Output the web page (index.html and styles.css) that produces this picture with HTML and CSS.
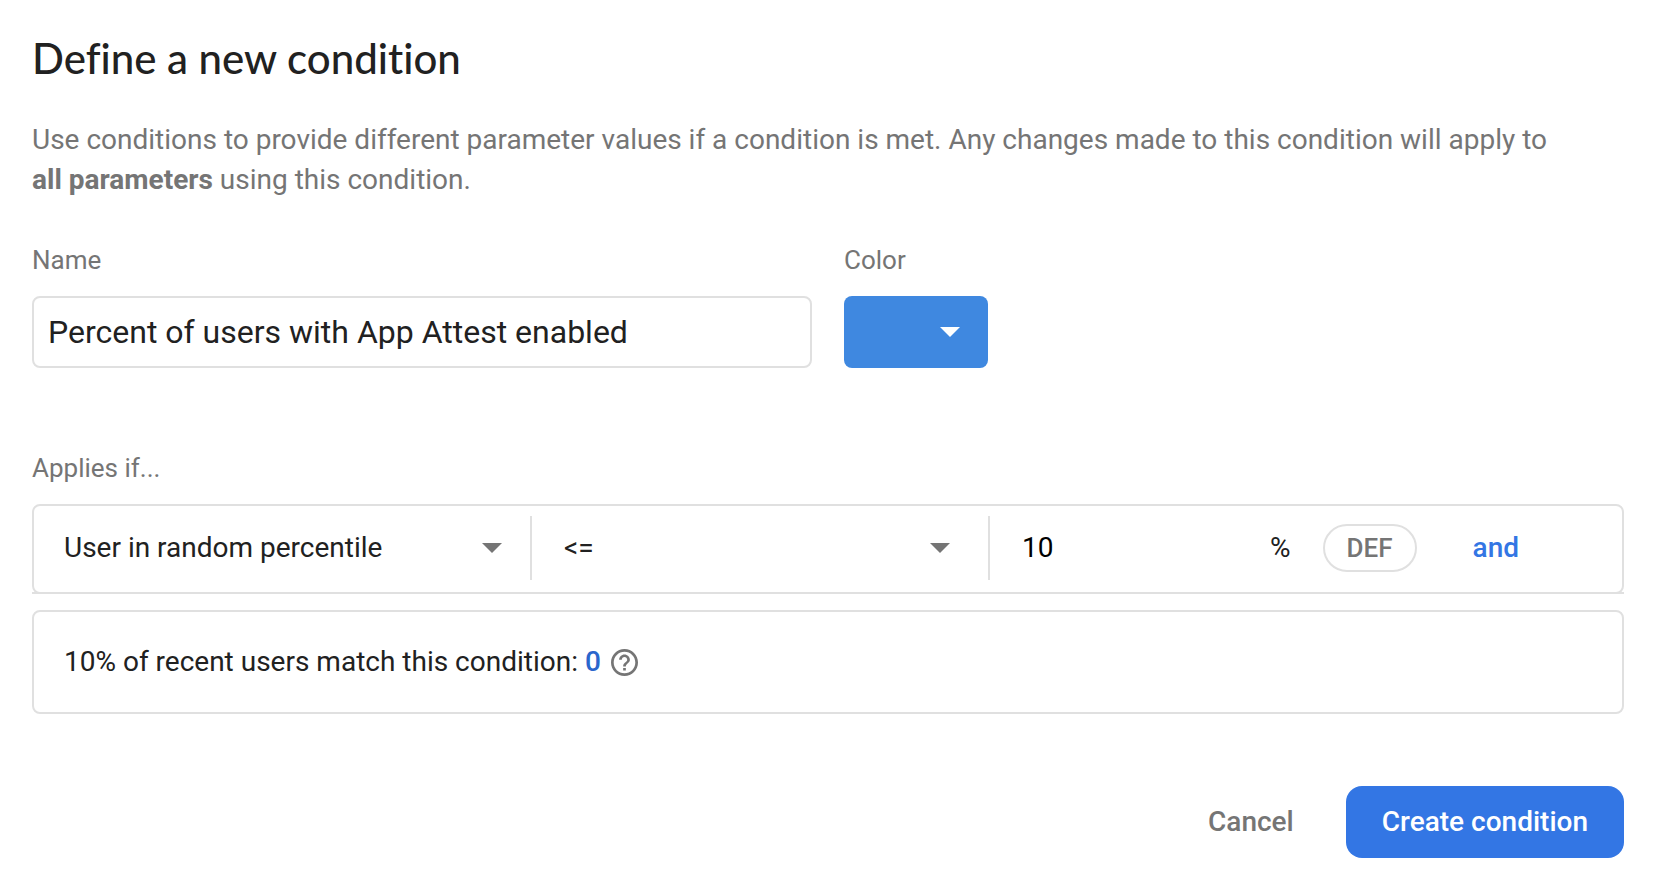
FILE: index.html
```html
<!DOCTYPE html>
<html lang="en">
<head>
<meta charset="utf-8">
<title>Define a new condition</title>
<link rel="stylesheet" href="styles.css">
</head>
<body>
<form class="dialog">
  <h1 class="title">Define a new condition</h1>
  <p class="intro">Use conditions to provide different parameter values if a condition is met. Any changes made to this condition will apply to <strong class="scope">all parameters</strong> using this condition.</p>

  <div class="fields">
    <div class="field field-name">
      <label class="label" for="name">Name</label>
      <input class="text-input" id="name" type="text" value="Percent of users with App Attest enabled">
    </div>
    <div class="field field-color">
      <label class="label" for="color">Color</label>
      <div class="dropdown">
        <select class="swatch" id="color"><option value="blue" label=" "></option></select>
        <svg class="caret caret-light" viewBox="0 0 20 10" aria-hidden="true"><path d="M0 0h20L10 10z"/></svg>
      </div>
    </div>
  </div>

  <fieldset class="rules">
    <legend class="label">Applies if...</legend>
    <div class="rule-list">
      <div class="rule">
        <div class="dropdown cell">
          <select class="rule-select" aria-label="Condition type"><option>User in random percentile</option></select>
          <svg class="caret" viewBox="0 0 20 10" aria-hidden="true"><path d="M0 0h20L10 10z"/></svg>
        </div>
        <div class="dropdown cell cell-operator">
          <select class="rule-select operator" aria-label="Operator"><option>&lt;=</option></select>
          <svg class="caret" viewBox="0 0 20 10" aria-hidden="true"><path d="M0 0h20L10 10z"/></svg>
        </div>
        <div class="value">
          <input class="value-input" type="text" inputmode="numeric" aria-label="Percentile" value="10">
          <span class="unit">%</span>
          <button class="chip" type="button">DEF</button>
          <button class="and" type="button">and</button>
        </div>
      </div>
    </div>
    <div class="estimate">
      <span>10% of recent users match this condition: <b class="count">0</b></span>
      <svg class="help" viewBox="2 2 20 20" role="img" aria-label="Help"><path d="M11 18h2v-2h-2v2zm1-16C6.48 2 2 6.48 2 12s4.48 10 10 10 10-4.48 10-10S17.52 2 12 2zm0 18c-4.41 0-8-3.59-8-8s3.59-8 8-8 8 3.59 8 8-3.59 8-8 8zm0-14c-2.21 0-4 1.79-4 4h2c0-1.1.9-2 2-2s2 .9 2 2c0 2-3 1.75-3 5h2c0-2.25 3-2.5 3-5 0-2.21-1.79-4-4-4z"/></svg>
    </div>
  </fieldset>

  <div class="actions">
    <button class="button cancel" type="button">Cancel</button>
    <button class="button create" type="submit">Create condition</button>
  </div>
</form>
</body>
</html>
```
FILE: styles.css
```css
* {
  box-sizing: border-box;
}

body {
  margin: 0;
  background: #fff;
  color: #212121;
  font: 28px/40px Roboto, "Liberation Sans", sans-serif;
}

input,
select,
button {
  margin: 0;
  padding: 0;
  border: 0;
  background: none;
  color: inherit;
  font: inherit;
}

select {
  appearance: none;
}

.dialog {
  padding: 32px 31px 24px 32px;
}

.title {
  margin: 0 0 36px;
  font: 500 42px/52px Lato, "Open Sans", sans-serif;
  font-variant-ligatures: none;
}

.intro {
  margin: 0 0 40px;
  color: #757575;
}

.scope {
  white-space: nowrap;
}

.fields {
  display: flex;
  gap: 32px;
  margin-bottom: 80px;
}

.field {
  display: flex;
  flex-direction: column;
  gap: 16px;
}

.field-name {
  flex: 0 1 780px;
}

.field-color {
  flex: 0 0 144px;
}

.label {
  padding: 0;
  color: #757575;
  font-size: 26px;
  line-height: 40px;
}

.text-input {
  width: 100%;
  height: 72px;
  padding: 0 14px;
  border: 2px solid #e0e0e0;
  border-radius: 8px;
  font-size: 32px;
}

.dropdown {
  display: grid;
  align-items: center;
}

.dropdown > * {
  grid-area: 1 / 1;
}

.swatch {
  width: 100%;
  height: 72px;
  border-radius: 8px;
  background: #3f88e0;
}

.caret {
  justify-self: end;
  width: 20px;
  height: 10px;
  margin-right: 28px;
  fill: #757575;
  pointer-events: none;
}

.caret-light {
  fill: #fff;
}

.rules {
  min-width: 0;
  margin: 0;
  padding: 0;
  border: 0;
}

.rules > .label {
  margin-bottom: 16px;
}

.rule-list {
  margin-bottom: 16px;
  border-bottom: 2px solid #e0e0e0;
}

.rule {
  display: grid;
  grid-template-columns: minmax(0, 498fr) minmax(0, 458fr) minmax(0, 632fr);
  margin-bottom: -2px;
  padding: 10px 0 12px;
  border: 2px solid #e0e0e0;
  border-radius: 8px;
}

.cell {
  border-right: 2px solid #e0e0e0;
}

.cell-operator .caret {
  margin-right: 38px;
}

.rule-select {
  width: 100%;
  height: 64px;
  padding: 0 60px 0 30px;
}

.operator {
  padding-left: 32px;
}

.value {
  display: flex;
  align-items: center;
  padding: 0 103px 0 32px;
}

.value-input {
  flex: 1;
  min-width: 0;
  color: #000;
}

.chip {
  height: 48px;
  margin: 0 56px 0 32px;
  padding: 0 22px;
  border: 2px solid #e0e0e0;
  border-radius: 24px;
  color: #757575;
  font-size: 26px;
  font-weight: 500;
}

.and {
  color: #3376e4;
  font-weight: 500;
}

.estimate {
  display: flex;
  align-items: center;
  gap: 10px;
  padding: 30px;
  border: 2px solid #e0e0e0;
  border-radius: 8px;
}

.count {
  color: #2a66cc;
  font-weight: 500;
}

.help {
  width: 27px;
  height: 27px;
  fill: #757575;
}

.actions {
  display: flex;
  justify-content: flex-end;
  gap: 16px;
  margin-top: 72px;
}

.button {
  height: 72px;
  padding: 0 36px;
  border-radius: 16px;
  font-weight: 500;
}

.cancel {
  color: #757575;
}

.create {
  background: #3376e4;
  color: #fff;
}
```
